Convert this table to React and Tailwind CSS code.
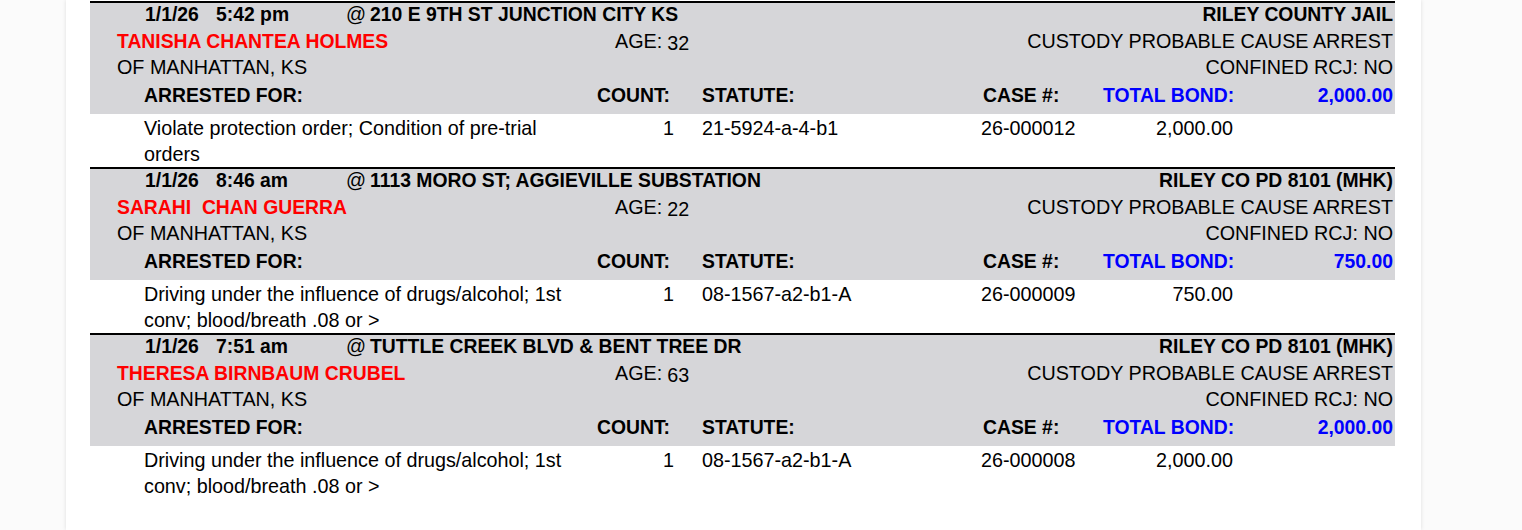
import React from "react";

const records = [
  {
    date: "1/1/26",
    time: "5:42 pm",
    address: "210 E 9TH ST JUNCTION CITY KS",
    agency: "RILEY COUNTY JAIL",
    name: "TANISHA CHANTEA HOLMES",
    age: "32",
    from: "OF MANHATTAN, KS",
    custody: "CUSTODY PROBABLE CAUSE ARREST",
    confined: "CONFINED RCJ: NO",
    total: "2,000.00",
    charges: [
      {
        desc: "Violate protection order; Condition of pre-trial orders",
        count: "1",
        statute: "21-5924-a-4-b1",
        caseNo: "26-000012",
        bond: "2,000.00",
      },
    ],
  },
  {
    date: "1/1/26",
    time: "8:46 am",
    address: "1113 MORO ST; AGGIEVILLE SUBSTATION",
    agency: "RILEY CO PD 8101 (MHK)",
    name: "SARAHI  CHAN GUERRA",
    age: "22",
    from: "OF MANHATTAN, KS",
    custody: "CUSTODY PROBABLE CAUSE ARREST",
    confined: "CONFINED RCJ: NO",
    total: "750.00",
    charges: [
      {
        desc: "Driving under the influence of drugs/alcohol; 1st conv; blood/breath .08 or >",
        count: "1",
        statute: "08-1567-a2-b1-A",
        caseNo: "26-000009",
        bond: "750.00",
      },
    ],
  },
  {
    date: "1/1/26",
    time: "7:51 am",
    address: "TUTTLE CREEK BLVD & BENT TREE DR",
    agency: "RILEY CO PD 8101 (MHK)",
    name: "THERESA BIRNBAUM CRUBEL",
    age: "63",
    from: "OF MANHATTAN, KS",
    custody: "CUSTODY PROBABLE CAUSE ARREST",
    confined: "CONFINED RCJ: NO",
    total: "2,000.00",
    charges: [
      {
        desc: "Driving under the influence of drugs/alcohol; 1st conv; blood/breath .08 or >",
        count: "1",
        statute: "08-1567-a2-b1-A",
        caseNo: "26-000008",
        bond: "2,000.00",
      },
    ],
  },
];

const B = "font-bold text-[19.35px]";
const R = "text-[19.75px]";

function Record({ r }) {
  return (
    <div className="border-t-2 border-black">
      <div className="bg-[#d6d6d9] pb-[5px]">
        {/* date row */}
        <div className="flex h-[23px] items-center pl-[55px] pr-[2px] whitespace-nowrap">
          <span className={`${B} w-[71px]`}>{r.date}</span>
          <span className={`${B} w-[130px]`}>{r.time}</span>
          <span className={`${R} w-[24px]`}>@</span>
          <span className={`${B} flex-1`}>{r.address}</span>
          <span className={B}>{r.agency}</span>
        </div>
        {/* name row */}
        <div className="flex h-[29px] items-center pt-[2px] pl-[27px] pr-[2px] whitespace-nowrap">
          <span className={`${B} w-[498px] text-[#ff0000] whitespace-pre`}>{r.name}</span>
          <span className="flex flex-1 items-end">
            <span className={R}>AGE:</span>
            <span className={`${R} ml-[5px] mb-[3px] leading-none`}>{r.age}</span>
          </span>
          <span className={R}>{r.custody}</span>
        </div>
        {/* from row */}
        <div className="flex h-[26px] items-center pl-[27px] pr-[2px] whitespace-nowrap">
          <span className={`${R} flex-1`}>{r.from}</span>
          <span className={R}>{r.confined}</span>
        </div>
        {/* header row */}
        <div className="flex h-[28px] items-center pl-[54px] pr-[2px] whitespace-nowrap">
          <span className={`${B} w-[446px]`}>ARRESTED FOR:</span>
          <span className={`${B} w-[84px] text-right pr-[4px]`}>COUNT:</span>
          <span className={`${B} ml-[28px] w-[279px]`}>STATUTE:</span>
          <span className={`${B} w-[122px] pl-[2px]`}>CASE #:</span>
          <span className={`${B} w-[130px] text-right text-[#0000ff]`}>TOTAL BOND:</span>
          <span className={`${B} flex-1 text-right text-[#0000ff]`}>{r.total}</span>
        </div>
      </div>
      <div className="pt-[1px]">
        {r.charges.map((c, i) => (
          <div key={i} className="flex items-start pl-[54px] leading-[26px]">
            <span className={`${R} w-[446px] leading-[26px] pr-[20px]`}>{c.desc}</span>
            <span className={`${R} w-[84px] text-right`}>{c.count}</span>
            <span className={`${R} ml-[28px] w-[279px]`}>{c.statute}</span>
            <span className={`${R} w-[122px]`}>{c.caseNo}</span>
            <span className={`${R} w-[130px] text-right`}>{c.bond}</span>
          </div>
        ))}
      </div>
    </div>
  );
}

export default function App() {
  return (
    <div
      className="min-h-screen bg-[#fbfbfb] text-black"
      style={{ fontFamily: '"Liberation Sans", Arial, sans-serif' }}
    >
      <div className="ml-[66px] w-[1355px] min-h-[530px] bg-white pt-[1px] pl-[24px] pr-[26px] shadow-[0_0_4px_rgba(0,0,0,0.12)]">
        {records.map((r, i) => (
          <Record key={i} r={r} />
        ))}
      </div>
    </div>
  );
}
